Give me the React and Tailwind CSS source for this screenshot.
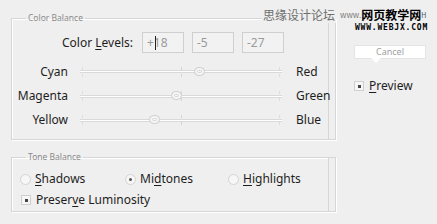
import React from "react";

const font = { fontFamily: '"Noto Sans", "Open Sans", sans-serif' };

function Slider({ left, right, value, h }) {
  return (
    <div className={`flex items-center ${h}`}>
      <div className="w-[56px] text-right text-[12px] text-[#1e1e1e]">{left}</div>
      <div className="relative ml-[12px] w-[202px] h-[24px] flex items-center">
        <div className="w-full h-[3px] border-y border-[#d9d9d9] bg-white" />
        <div className="absolute left-[2px] top-[7px] w-px h-[3px] bg-[#dcdcdc]" />
        <div className="absolute left-[2px] top-[14px] w-px h-[3px] bg-[#dcdcdc]" />
        <div className="absolute left-[101px] top-[7px] w-px h-[3px] bg-[#d4d4d4]" />
        <div className="absolute left-[101px] top-[14px] w-px h-[3px] bg-[#d4d4d4]" />
        <div className="absolute left-[199px] top-[7px] w-px h-[3px] bg-[#dcdcdc]" />
        <div className="absolute left-[199px] top-[14px] w-px h-[3px] bg-[#dcdcdc]" />
        <div
          className="absolute top-[7px] w-[11px] h-[9px] rounded-full border border-[#cdcdcd] bg-[#f4f4f4] flex items-center justify-center"
          style={{ left: 101 + value - 5 }}
        >
          <div className="w-[5px] h-[3px] rounded-full border border-[#d8d8d8]" />
        </div>
      </div>
      <div className="ml-[14px] text-[12px] text-[#1e1e1e]">{right}</div>
    </div>
  );
}

function Radio({ checked, label }) {
  return (
    <div className="flex items-center">
      <div className="w-[11px] h-[11px] rounded-full border border-[#d4d4d4] bg-[#f6f6f6] flex items-center justify-center">
        {checked && <div className="w-[3px] h-[3px] rounded-full bg-[#555]" />}
      </div>
      <span className="ml-[4px] text-[12px] text-[#1e1e1e]">{label}</span>
    </div>
  );
}

function U({ children }) {
  return <span className="underline underline-offset-2">{children}</span>;
}

const box =
  "w-[325px] border border-[#d6d6d6] shadow-[inset_-6px_0_0_#efefef,inset_-7px_0_0_#d6d6d6,inset_1px_1px_0_#ffffff,1px_1px_0_#ffffff]";

export default function App() {
  return (
    <div className="relative w-[437px] h-[224px] bg-[#efefef] overflow-hidden flex" style={font}>
      <div className="w-[336px] pl-[11px] pt-[12px]">
        <fieldset className={`${box} h-[128px]`}>
          <legend className="ml-[14px] px-[2px] text-[8.5px] leading-[12px] text-[#8a8a8a]">Color Balance</legend>
          <div className="pt-[8px] flex items-center">
            <div className="w-[121px] text-right text-[12px] text-[#1e1e1e]">
              Color <U>L</U>evels:
            </div>
            <div className="ml-[9px] flex gap-[8px]">
              <div className="relative w-[42px] h-[21px] border border-[#cfcfcf] bg-[#f2f2f2] text-[12px] text-[#9a9a9a] pl-[4px] leading-[19px]">
                +18
                <div className="absolute left-[12px] top-[3px] w-px h-[14px] bg-[#222]" />
              </div>
              <div className="w-[42px] h-[21px] border border-[#cfcfcf] bg-[#f2f2f2] text-[12px] text-[#9a9a9a] pl-[4px] leading-[19px]">-5</div>
              <div className="w-[42px] h-[21px] border border-[#cfcfcf] bg-[#f2f2f2] text-[12px] text-[#9a9a9a] pl-[4px] leading-[19px]">-27</div>
            </div>
          </div>
          <div className="mt-[6px]">
            <Slider left="Cyan" right="Red" value={18} h="h-[25px]" />
            <Slider left="Magenta" right="Green" value={-5} h="h-[24px]" />
            <Slider left="Yellow" right="Blue" value={-27} h="h-[24px]" />
          </div>
        </fieldset>
        <fieldset className={`${box} mt-[11px] h-[61px]`}>
          <legend className="ml-[14px] px-[2px] text-[8.5px] leading-[12px] text-[#8a8a8a]">Tone Balance</legend>
          <div className="pl-[8px] pt-[7px] flex">
            <div className="w-[105px]"><Radio label={<><U>S</U>hadows</>} /></div>
            <div className="w-[103px]"><Radio checked label={<>Mi<U>d</U>tones</>} /></div>
            <Radio label={<><U>H</U>ighlights</>} />
          </div>
          <div className="pl-[9px] mt-[3px] flex items-center">
            <div className="w-[10px] h-[10px] border border-[#cfcfcf] bg-[#f6f6f6] flex items-center justify-center">
              <div className="w-[3px] h-[3px] bg-[#444]" />
            </div>
            <span className="ml-[5px] text-[12px] text-[#1e1e1e]">
              Preser<U>v</U>e Luminosity
            </span>
          </div>
        </fieldset>
      </div>
      <div className="flex-1 pl-[18px] pt-[45px] flex flex-col">
        <div className="relative w-[72px] h-[14px] bg-white border border-[#e4e4e4] text-[9px] leading-[12px] text-[#a0a0a0] text-center">
          Cancel
          <div className="absolute left-[16px] top-[12px] w-0 h-0 border-l-[5px] border-r-[5px] border-t-[5px] border-l-transparent border-r-transparent border-t-white" />
        </div>
        <div className="mt-[18px] flex items-center">
          <div className="w-[10px] h-[10px] border border-[#cfcfcf] bg-[#f6f6f6] flex items-center justify-center">
            <div className="w-[3px] h-[3px] bg-[#444]" />
          </div>
          <span className="ml-[5px] text-[12px] text-[#1e1e1e]"><U>P</U>review</span>
        </div>
      </div>
      <div className="absolute left-[262px] top-[7px] flex items-end leading-[16px]" style={{ fontFamily: '"Noto Sans CJK SC", sans-serif' }}>
        <span className="text-[12px] text-[#6e6e6e] bg-[#efefef] px-[1px]">思缘设计论坛</span>
        <span className="ml-[4px] text-[8px] text-[#777]">www.</span>
        <span className="text-[12px] font-bold text-black">网页教学网</span>
        <span className="text-[7px] text-[#555]">H</span>
      </div>
      <div className="absolute left-[355px] top-[23px] text-[8px] leading-[9px] font-bold text-black tracking-[0.8px]" style={{ fontFamily: '"DejaVu Sans Mono", monospace' }}>
        WWW.WEBJX.COM
      </div>
    </div>
  );
}
